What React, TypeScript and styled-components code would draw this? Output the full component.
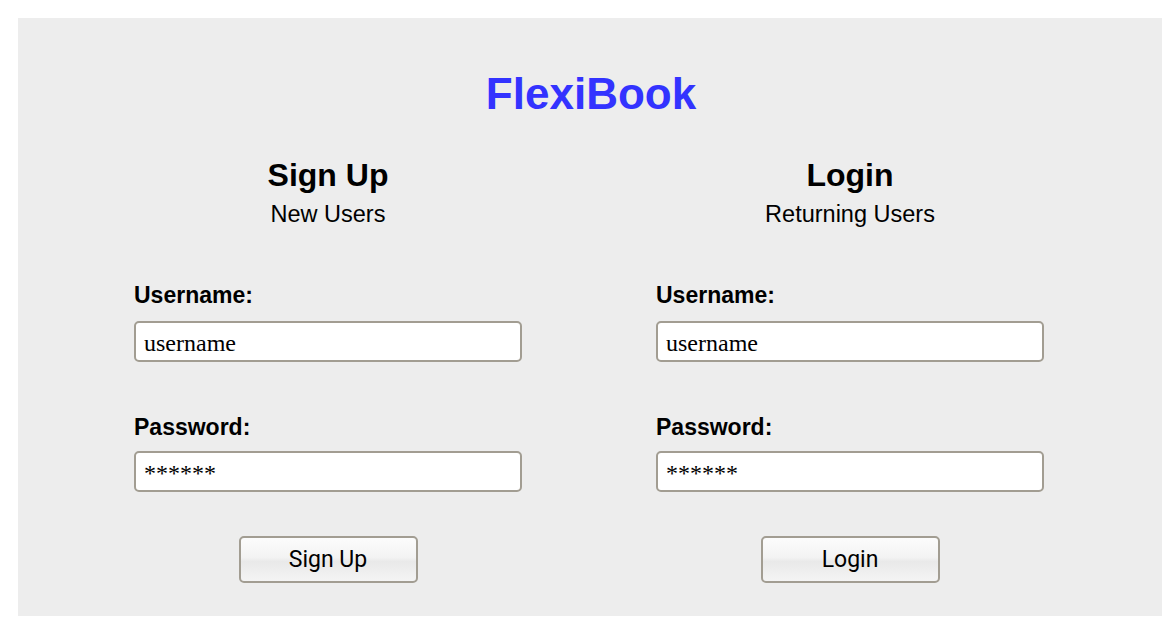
import React from "react";
import styled, { createGlobalStyle } from "styled-components";

const GlobalStyle = createGlobalStyle`
  body {
    margin: 0;
    background: #ffffff;
    font-family: "Liberation Sans", Arial, Helvetica, sans-serif;
  }
`;

const Panel = styled.div`
  margin: 18px 0 12px 18px;
  width: 1144px;
  background: #ededed;
  padding: 54px 0 33px;
  box-sizing: border-box;
`;

const Title = styled.h1`
  margin: 0;
  font-size: 44px;
  line-height: 44px;
  font-weight: bold;
  color: #3333ff;
  text-align: center;
  padding-left: 2px;
`;

const Columns = styled.div`
  display: flex;
  justify-content: center;
  gap: 134px;
  margin: 43px 2px 0 0;
`;

const Column = styled.form`
  width: 388px;
  display: flex;
  flex-direction: column;
  margin: 0;
`;

const Heading = styled.h2`
  margin: 0;
  font-size: 32px;
  line-height: 32px;
  font-weight: bold;
  text-align: center;
  color: #000;
`;

const Subheading = styled.div`
  margin-top: 11px;
  font-size: 23.5px;
  line-height: 24px;
  text-align: center;
  color: #000;
`;

const Label = styled.label<{ $gap: number }>`
  margin-top: ${({ $gap }) => $gap}px;
  font-size: 23px;
  line-height: 23px;
  font-weight: bold;
  color: #000;
`;

const Input = styled.input<{ $gap: number }>`
  margin-top: ${({ $gap }) => $gap}px;
  height: 41px;
  box-sizing: border-box;
  border: 2px solid #a29d92;
  border-radius: 5px;
  background: #fff;
  padding: 4px 8px 0;
  font-family: "Liberation Serif", "Times New Roman", serif;
  font-size: 24px;
  color: #000;
  outline: none;
`;

const Button = styled.button`
  align-self: center;
  margin-top: 44px;
  width: 179px;
  height: 47px;
  box-sizing: border-box;
  border: 2px solid #a29d92;
  border-radius: 5px;
  background: linear-gradient(#fcfcfc 0%, #f3f3f3 45%, #e9e9e9 55%, #f4f4f4 100%);
  font-family: Roboto, "Liberation Sans", sans-serif;
  font-size: 23px;
  color: #000;
  padding: 0;
  cursor: pointer;
`;

const forms = [
  { title: "Sign Up", sub: "New Users", action: "Sign Up" },
  { title: "Login", sub: "Returning Users", action: "Login" },
];

export default function App() {
  return (
    <>
      <GlobalStyle />
      <Panel>
        <Title>FlexiBook</Title>
        <Columns>
          {forms.map((f) => (
            <Column key={f.title} onSubmit={(e) => e.preventDefault()}>
              <Heading>{f.title}</Heading>
              <Subheading>{f.sub}</Subheading>
              <Label $gap={58}>Username:</Label>
              <Input $gap={14} type="text" defaultValue="username" />
              <Label $gap={54}>Password:</Label>
              <Input $gap={12} type="text" defaultValue="******" />
              <Button type="submit">{f.action}</Button>
            </Column>
          ))}
        </Columns>
      </Panel>
    </>
  );
}
